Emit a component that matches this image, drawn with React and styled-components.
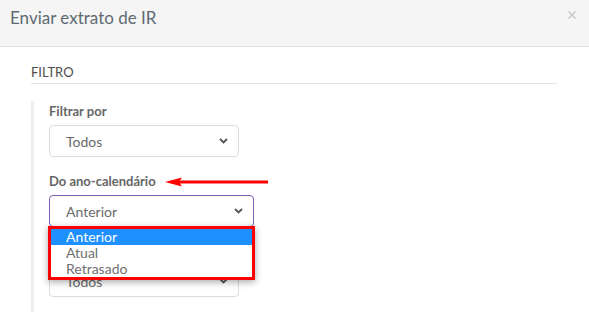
import React from "react";
import styled, { createGlobalStyle } from "styled-components";

const Global = createGlobalStyle`
  html, body { margin: 0; padding: 0; background: #fff; }
  body { font-family: Lato, "Open Sans", sans-serif; }
  * { box-sizing: border-box; }
`;

const Modal = styled.div`
  width: 589px;
  height: 326px;
  background: #fff;
  overflow: hidden;
`;

const Header = styled.div`
  height: 47px;
  display: flex;
  justify-content: space-between;
  align-items: flex-start;
  padding: 7px 13px 0 10px;
  background: #f5f5f5;
  border-bottom: 1px solid #e3e3e3;
`;

const Title = styled.h4`
  margin: 0;
  font-size: 17px;
  line-height: 22px;
  font-weight: 400;
  color: #5f6a72;
`;

const Close = styled.button`
  border: 0;
  background: none;
  padding: 0;
  margin-top: 4px;
  width: 8px;
  height: 8px;
  display: block;
  cursor: pointer;
  svg { display: block; }
`;

const Body = styled.div`
  padding: 16px 32px 0 31px;
`;

const SectionTitle = styled.div`
  font-size: 13px;
  line-height: 18px;
  color: #4d4d4d;
  padding-bottom: 2px;
  border-bottom: 1px solid #e5e5e5;
`;

const Group = styled.div`
  margin-top: 17px;
  border-left: 3px solid #eeeeee;
  padding: 1px 0 15px 15px;
`;

const Field = styled.div`
  position: relative;
  & + & { margin-top: 15px; }
`;

const LabelRow = styled.div`
  display: flex;
  align-items: center;
  height: 18px;
  margin-bottom: 5px;
`;

const Label = styled.label`
  font-size: 13px;
  line-height: 18px;
  font-weight: 700;
  color: #666;
`;

const Arrow = styled.svg`
  margin-left: 9px;
  margin-top: 1px;
  display: block;
`;

const Select = styled.div`
  width: ${(p) => p.$w}px;
  height: 32px;
  display: flex;
  align-items: center;
  justify-content: space-between;
  padding: 0 10px 0 16px;
  border: 1px solid ${(p) => (p.$focus ? "#7a5fb0" : "#dcdcdc")};
  border-radius: 4px;
  background: #fff;
  font-size: 14px;
  color: #6a6a6a;
`;

const Chevron = () => (
  <svg width="9" height="6" viewBox="0 0 9 6">
    <path d="M1 1 L4.5 4.5 L8 1" fill="none" stroke="#555" strokeWidth="1.8" />
  </svg>
);

const List = styled.ul`
  position: absolute;
  left: -1px;
  top: 54px;
  width: 207px;
  margin: 0;
  padding: 0;
  list-style: none;
  border: 3px solid #ff0000;
  background: #fff;
  box-shadow: 0 2px 7px rgba(0, 0, 0, 0.35);
  z-index: 2;
`;

const Option = styled.li`
  height: 16px;
  line-height: 16px;
  font-size: 14px;
  padding-left: 15px;
  color: ${(p) => (p.$active ? "#fff" : "#707070")};
  background: ${(p) => (p.$active ? "#1e90ff" : "#fff")};
`;

export default function App() {
  return (
    <Modal>
      <Global />
      <Header>
        <Title>Enviar extrato de IR</Title>
        <Close aria-label="Fechar">
          <svg width="8" height="8" viewBox="0 0 8 8">
            <path d="M0.5 0.5 L7.5 7.5 M7.5 0.5 L0.5 7.5" stroke="#c6c6c6" strokeWidth="1.4" />
          </svg>
        </Close>
      </Header>
      <Body>
        <SectionTitle>FILTRO</SectionTitle>
        <Group>
          <Field>
            <LabelRow>
              <Label>Filtrar por</Label>
            </LabelRow>
            <Select $w={190}>
              <span>Todos</span>
              <Chevron />
            </Select>
          </Field>
          <Field>
            <LabelRow>
              <Label>Do ano-calendário</Label>
              <Arrow width="104" height="10" viewBox="0 0 104 10">
                <path d="M12 3.6 H103 V6.4 H12 Z" fill="#f00" />
                <path d="M0 5 L17 0.5 L14 5 L17 9.5 Z" fill="#f00" />
              </Arrow>
            </LabelRow>
            <Select $w={205} $focus>
              <span>Anterior</span>
              <Chevron />
            </Select>
            <List>
              <Option $active>Anterior</Option>
              <Option>Atual</Option>
              <Option>Retrasado</Option>
            </List>
          </Field>
          <Field>
            <LabelRow />
            <Select $w={190}>
              <span>Todos</span>
              <Chevron />
            </Select>
          </Field>
        </Group>
      </Body>
    </Modal>
  );
}
